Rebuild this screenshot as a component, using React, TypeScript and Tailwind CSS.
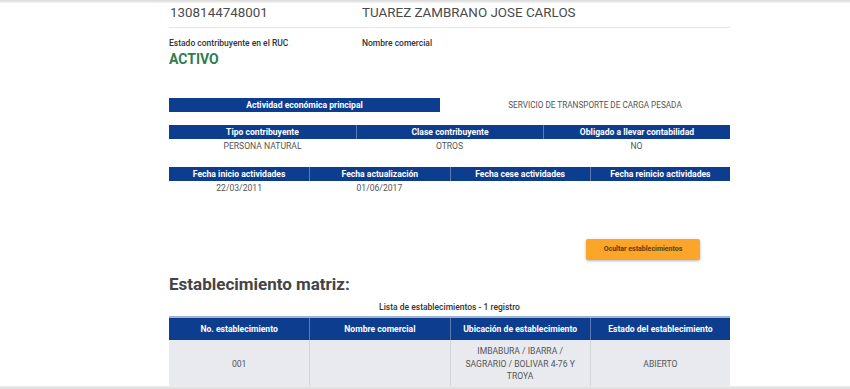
import React from "react";

const BLUE = "bg-[#0d3d8f]";

function HeaderRow({ cols }: { cols: string[] }) {
  const grid = cols.length === 3 ? "grid-cols-3" : "grid-cols-4";
  return (
    <div className={`grid ${grid} ${BLUE} h-[14px]`}>
      {cols.map((c, i) => (
        <div
          key={i}
          className={`flex items-center justify-center text-[8.6px] font-bold text-white leading-none whitespace-nowrap ${i > 0 ? "border-l border-[#5a7bb5]" : ""}`}
        >
          {c}
        </div>
      ))}
    </div>
  );
}

function ValueRow({ cols }: { cols: string[] }) {
  const grid = cols.length === 3 ? "grid-cols-3" : "grid-cols-4";
  return (
    <div className={`grid ${grid} h-[15px]`}>
      {cols.map((c, i) => (
        <div key={i} className="flex items-center justify-center text-[8.6px] text-[#555] leading-none">
          {c}
        </div>
      ))}
    </div>
  );
}

export default function App() {
  return (
    <div
      className="w-[850px] h-[389px] overflow-hidden flex flex-col bg-white"
      style={{ fontFamily: "Roboto, 'Liberation Sans', sans-serif" }}
    >
      <div className="h-[3px] bg-gradient-to-b from-[#d9d9d9] to-[#f4f4f4]" />
      <div className="flex-1 overflow-hidden">
        <div className="w-[561px] ml-[169px]">
          <div className="flex border-b border-[#e6e6e6] h-[25px] items-center pb-[4px] text-[13.4px] text-[#4a4a4a]">
            <div className="w-[193px] pl-[1px]">1308144748001</div>
            <div>TUAREZ ZAMBRANO JOSE CARLOS</div>
          </div>
          <div className="flex mt-[9px]">
            <div className="w-[193px]">
              <div className="text-[8.5px] font-medium text-[#333] leading-[12px]">Estado contribuyente en el RUC</div>
              <div className="text-[14px] font-bold text-[#2e7d4e] leading-[17px] mt-[2px]">ACTIVO</div>
            </div>
            <div className="text-[8.5px] font-medium text-[#333] leading-[12px]">Nombre comercial</div>
          </div>
          <div className="flex mt-[30px] h-[14px]">
            <div className={`w-[271px] ${BLUE} flex items-center justify-center text-[8.6px] font-bold text-white leading-none`}>
              Actividad económica principal
            </div>
            <div className="flex-1 flex items-center justify-center pl-[20px] text-[8.2px] text-[#555] leading-none">
              SERVICIO DE TRANSPORTE DE CARGA PESADA
            </div>
          </div>
          <div className="mt-[13px]">
            <HeaderRow cols={["Tipo contribuyente", "Clase contribuyente", "Obligado a llevar contabilidad"]} />
            <ValueRow cols={["PERSONA NATURAL", "OTROS", "NO"]} />
          </div>
          <div className="mt-[13px]">
            <HeaderRow
              cols={["Fecha inicio actividades", "Fecha actualización", "Fecha cese actividades", "Fecha reinicio actividades"]}
            />
            <ValueRow cols={["22/03/2011", "01/06/2017", "", ""]} />
          </div>
          <div className="flex justify-end mt-[43px] pr-[30px]">
            <button className="w-[114px] h-[21px] bg-[#fba52b] rounded-[2px] shadow-[0_1px_3px_rgba(0,0,0,0.3)] text-[7px] font-bold text-[#5a3d10]">
              Ocultar establecimientos
            </button>
          </div>
          <div className="mt-[12px] text-[17px] font-bold text-[#444] leading-[24px]">Establecimiento matriz:</div>
          <div className="mt-[5px] text-center text-[8.5px] font-medium text-[#333] leading-[12px]">
            Lista de establecimientos - 1 registro
          </div>
          <div className="mt-[3px] border-t-2 border-[#9fb4cf]">
            <div className={`grid grid-cols-4 ${BLUE} h-[22px]`}>
              {["No. establecimiento", "Nombre comercial", "Ubicación de establecimiento", "Estado del establecimiento"].map((c, i) => (
                <div
                  key={i}
                  className={`flex items-center justify-center text-[8.6px] font-bold text-white leading-none whitespace-nowrap ${i > 0 ? "border-l border-[#5a7bb5]" : ""}`}
                >
                  {c}
                </div>
              ))}
            </div>
            <div className="grid grid-cols-4 bg-[#e8eaef] h-[48px]">
              <div className="flex items-center justify-center text-[8.6px] text-[#555]">001</div>
              <div className="border-l border-[#d0d3d8]" />
              <div className="border-l border-[#d0d3d8] flex flex-col items-center justify-center text-center text-[8.6px] leading-[12.5px] text-[#555] whitespace-nowrap">
                <span>IMBABURA / IBARRA /</span>
                <span>SAGRARIO / BOLIVAR 4-76 Y</span>
                <span>TROYA</span>
              </div>
              <div className="border-l border-[#d0d3d8] flex items-center justify-center text-[8.6px] text-[#555]">
                ABIERTO
              </div>
            </div>
          </div>
        </div>
      </div>
      <div className="h-[3px] bg-gradient-to-b from-[#ececec] to-[#dcdcdc]" />
    </div>
  );
}
